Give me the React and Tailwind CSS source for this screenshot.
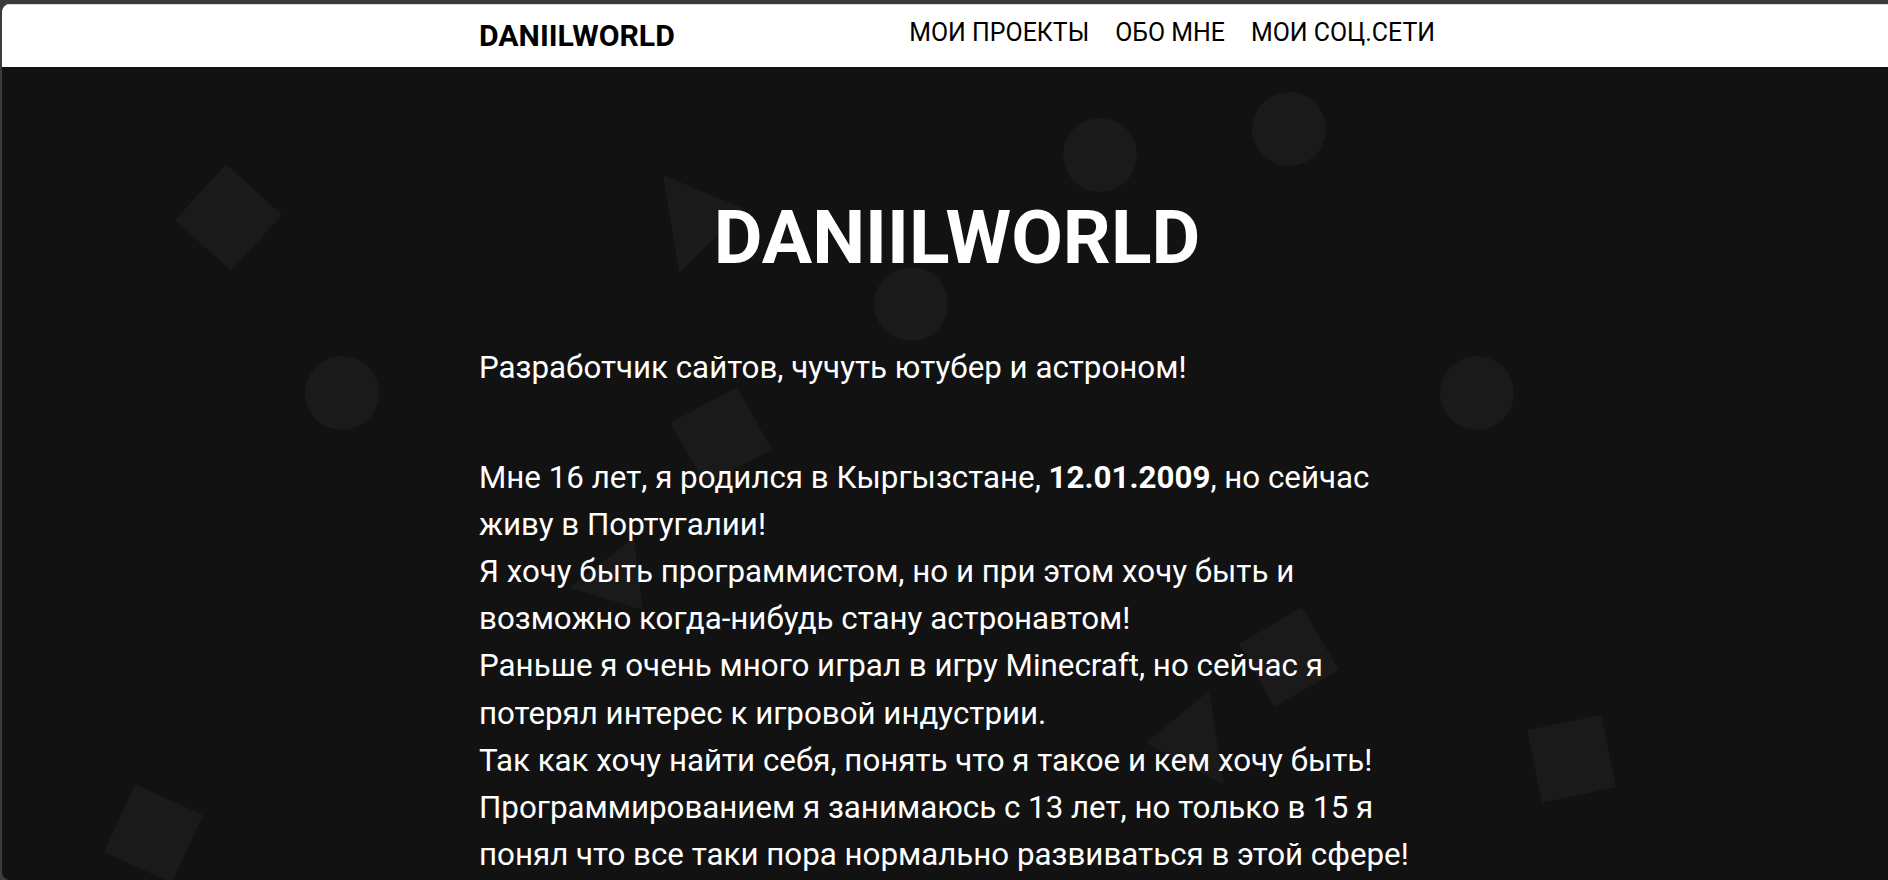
const font = { fontFamily: 'Roboto, "Noto Sans", sans-serif' };

function Shapes() {
  return (
    <svg className="absolute inset-0 w-full h-full" viewBox="2 67 1910 813" preserveAspectRatio="xMinYMin slice">
      <g fill="#1a1a1a">
        <polygon points="226,164 282,215 231,271 175,220" />
        <polygon points="663,175 745,209 679,273" />
        <circle cx="1100" cy="155" r="37" />
        <circle cx="1289" cy="129" r="37" />
        <circle cx="911" cy="304" r="37" />
        <circle cx="342" cy="393" r="37" />
        <circle cx="1477" cy="393" r="37" />
        <polygon points="737,387 772,450 705,484 670,423" />
        <polygon points="634,537 570,588 643,610" />
        <polygon points="1302,607 1339,670 1274,707 1239,644" />
        <polygon points="1209,691 1146,743 1224,785" />
        <polygon points="1527,730 1601,715 1616,787 1542,803" />
        <polygon points="135,784 203,815 172,883 104,852" />
      </g>
    </svg>
  );
}

export default function App() {
  return (
    <div className="h-[880px] w-full overflow-hidden bg-[#3b3b3b] pt-[4px] pl-[2px]" style={font}>
      <div className="w-[1910px] h-[876px] rounded-tl-[8px] rounded-bl-[8px] overflow-hidden bg-[#121212] flex flex-col">
        <header className="h-[63px] bg-white border-t border-[#d6d6d6] shrink-0">
          <div className="w-[956px] mx-auto h-full flex items-center justify-between">
            <a className="text-[30.2px] font-bold text-black">DANIILWORLD</a>
            <nav className="flex gap-[26px] text-[24.9px] text-black mb-[6px]">
              <a>МОИ ПРОЕКТЫ</a>
              <a>ОБО МНЕ</a>
              <a>МОИ СОЦ.СЕТИ</a>
            </nav>
          </div>
        </header>
        <main className="relative flex-1">
          <Shapes />
          <div className="relative w-[956px] mx-auto pt-[133px] text-white">
            <h1 className="text-[75px] leading-none font-bold text-center">DANIILWORLD</h1>
            <div className="text-[31.3px] leading-[47.1px]">
              <p className="mt-[69px]">Разработчик сайтов, чучуть ютубер и астроном!</p>
              <p className="mt-[63px]">
                Мне 16 лет, я родился в Кыргызстане, <b>12.01.2009</b>, но сейчас живу в Португалии!
                <br />
                Я хочу быть программистом, но и при этом хочу быть и возможно когда-нибудь стану астронавтом!
                <br />
                Раньше я очень много играл в игру Minecraft, но сейчас я потерял интерес к игровой индустрии.
                <br />
                Так как хочу найти себя, понять что я такое и кем хочу быть!
                <br />
                Программированием я занимаюсь с 13 лет, но только в 15 я понял что все таки пора нормально развиваться в этой сфере!
              </p>
            </div>
          </div>
        </main>
      </div>
    </div>
  );
}
